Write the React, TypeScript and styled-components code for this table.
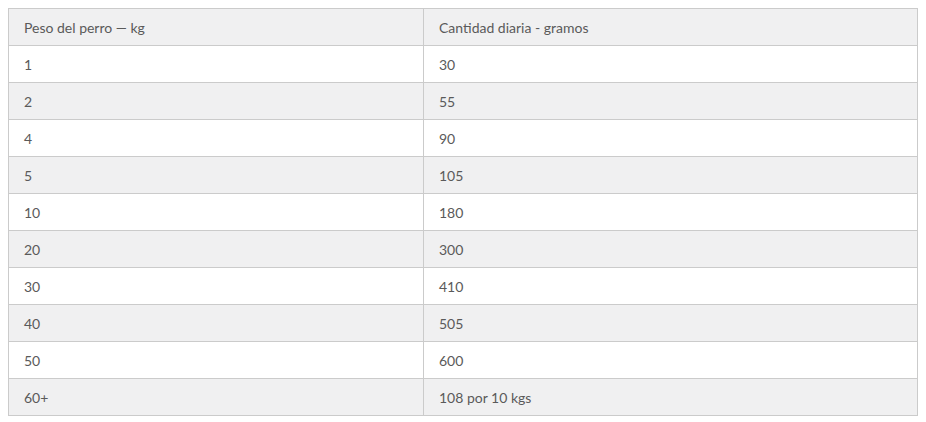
import React from "react";
import styled, { createGlobalStyle } from "styled-components";

const Global = createGlobalStyle`
  body { margin: 8px; background: #fff; font-family: Lato, "Open Sans", sans-serif; }
`;

const Table = styled.table`
  width: 910px;
  border-collapse: collapse;
  font-family: Lato, sans-serif;
  font-size: 14px;
  color: #5a5a5a;
`;

const Row = styled.tr<{ $shade: boolean }>`
  background: ${(p) => (p.$shade ? "#f0f0f1" : "#ffffff")};
`;

const Cell = styled.td`
  height: 37px;
  box-sizing: border-box;
  padding: 0 15px;
  border: 1px solid #cbcbcb;
  text-align: left;
  vertical-align: middle;
  font-weight: 400;
  &:first-child { width: 415px; }
`;

const HeadCell = styled(Cell).attrs({ as: "th" })``;

const rows: [string, string][] = [
  ["1", "30"],
  ["2", "55"],
  ["4", "90"],
  ["5", "105"],
  ["10", "180"],
  ["20", "300"],
  ["30", "410"],
  ["40", "505"],
  ["50", "600"],
  ["60+", "108 por 10 kgs"],
];

export default function App() {
  return (
    <>
      <Global />
      <Table>
        <thead>
          <Row $shade>
            <HeadCell>Peso del perro — kg</HeadCell>
            <HeadCell>Cantidad diaria - gramos</HeadCell>
          </Row>
        </thead>
        <tbody>
          {rows.map((r, i) => (
            <Row key={i} $shade={i % 2 === 1}>
              <Cell>{r[0]}</Cell>
              <Cell>{r[1]}</Cell>
            </Row>
          ))}
        </tbody>
      </Table>
    </>
  );
}
